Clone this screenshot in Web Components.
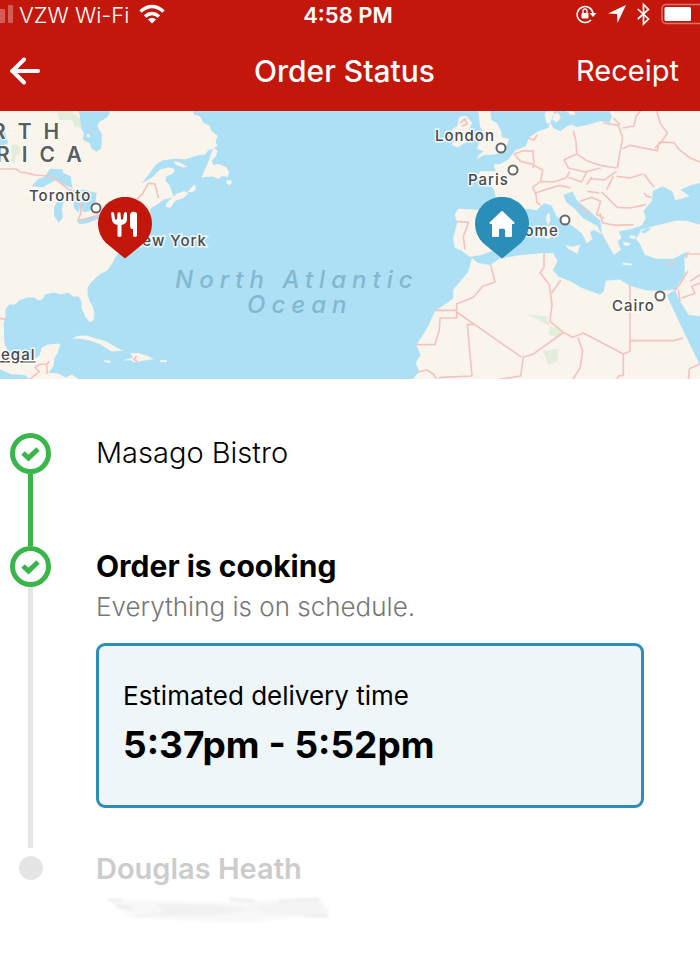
<!DOCTYPE html>
<html lang="en">
<head>
<meta charset="utf-8">
<meta name="viewport" content="width=device-width, initial-scale=1">
<title>Order Status</title>
<style>
  body { margin: 0; background: #fff; color: #000; font-family: Inter, "Liberation Sans", sans-serif; }
</style>
</head>
<body>
<order-page></order-page>

<script>
const define = (name, html) => {
  const template = document.createElement('template');
  template.innerHTML = html;
  customElements.define(name, class extends HTMLElement {
    constructor() {
      super();
      this.attachShadow({ mode: 'open' }).append(template.content.cloneNode(true));
    }
  });
};

define('status-bar', `
<style>
  :host { display: grid; grid-template-columns: 1fr auto 1fr; align-items: center; height: 30px; padding-right: 4px; color: #fff; font-size: 22px; line-height: 30px; overflow: hidden; }
  div { display: flex; align-items: center; }
  .net { font-weight: 300; gap: 6px; }
  .time { font-weight: 600; font-size: 22px; }
  .tray { justify-content: flex-end; gap: 11px; margin-right: -4px; }
  svg { display: block; flex: none; }
  .gap { gap: 10px; }
</style>
<div class="net">
  <svg width="13" height="30" fill="#fff" fill-opacity=".3" aria-label="Signal"><rect x="-4" y="9" width="9" height="14" rx="1"/><rect x="8" y="5" width="5" height="18" rx="1"/></svg>
  <div class="gap"><span>VZW Wi-Fi</span>
  <svg width="26" height="30" viewBox="0 0 26 30" aria-label="Wi-Fi"><g fill="none" stroke="#fff" stroke-width="3.500"><path d="M1.500 11.500Q13 1.500 24.500 11.500"/><path d="M6 16.500Q13 10.500 20 16.500"/></g><path d="M9 19.500Q13 16 17 19.500L13 23.500Z" fill="#fff"/></svg></div>
</div>
<div class="time">4:58 PM</div>
<div class="tray">
  <svg width="21" height="30" viewBox="0 0 21 30" aria-label="Rotation lock"><path d="M15 20A8 8 0 1 1 17 13" fill="none" stroke="#fff" stroke-width="1.600"/><path d="M13.500 13h7l-3.500 4z" fill="#fff"/><rect x="5.500" y="13" width="7" height="5.500" rx="1" fill="#fff"/><path d="M7 13v-2a2 2 0 0 1 4 0V13" fill="none" stroke="#fff" stroke-width="1.300"/></svg>
  <svg width="18" height="30" viewBox="0 0 18 30" aria-label="Location"><path d="M18 5L9.500 23 9 14 0 13.500Z" fill="#fff"/></svg>
  <svg width="13" height="30" viewBox="0 0 13 30" aria-label="Bluetooth"><path d="M.8 9L11.500 19 6.500 24V4.500L11.500 9.500 .8 19" fill="none" stroke="#fff" stroke-width="1.700"/></svg>
  <svg width="39" height="30" viewBox="0 0 39 30" aria-label="Battery"><rect x="1" y="4.500" width="48" height="19" rx="4" fill="none" stroke="#fff" stroke-opacity=".4" stroke-width="1.500"/><rect x="3.500" y="7" width="26.500" height="14" rx="1.500" fill="#fff"/></svg>
</div>`);

define('nav-bar', `
<style>
  :host { display: grid; grid-template-columns: 1fr auto 1fr; align-items: center; height: 81px; padding: 0 21px 0 10px; box-sizing: border-box; color: #fff; }
  button { border: 0; background: none; padding: 0; color: inherit; width: 32px; height: 44px; cursor: pointer; }
  svg { display: block; }
  h1 { margin: 0; font-size: 30px; font-weight: 500; line-height: 36px; }
  a { justify-self: end; color: inherit; text-decoration: none; font-size: 29px; line-height: 36px; font-weight: 400; }
</style>
<button type="button" aria-label="Back"><svg width="32" height="44" viewBox="0 0 32 44" fill="none" stroke="#fff" stroke-width="4" stroke-linecap="round" stroke-linejoin="round"><path d="M2 22H28M14 10.500L2.500 22 14 33.500"/></svg></button>
<h1><slot></slot></h1>
<a href="#receipt">Receipt</a>`);

define('map-pin', `
<style>
  :host { position: absolute; display: block; width: 54px; height: 62px; }
  svg { position: absolute; inset: 0; display: block; }
  path { fill: var(--pin); }
</style>
<svg width="54" height="62" viewBox="0 0 54 62"><path d="M27 61.500L8 46A27 27 0 1 1 46 46Z"/></svg>
<slot></slot>`);

define('route-map', `
<style>
  :host { display: block; position: relative; aspect-ratio: 700 / 268; overflow: hidden; background: #ade0f5; }
  .map { display: block; width: 100%; height: 100%; }
  .land { fill: #f9f5ed; stroke: #f9f5ed; stroke-width: 1; stroke-linejoin: round; }
  .water { fill: #ade0f5; }
  .border { fill: none; stroke: #f5c3bf; stroke-width: 5; stroke-linejoin: round; }
  .park { fill: #e2eddb; }
  .city { font-size: 15px; font-weight: 500; letter-spacing: 1px; fill: #494949; stroke: #fffc; stroke-width: 3; paint-order: stroke; }
  .area { font-size: 21px; font-weight: 600; letter-spacing: 12px; fill: #5b5e5e; stroke: #fffc; stroke-width: 2; paint-order: stroke; }
  .sea { font-size: 24px; font-weight: 500; font-style: italic; letter-spacing: 6px; fill: #82b8cf; }
  .dot { fill: #fff; stroke: #686868; stroke-width: 2; }
  .eat { left: 14%; top: 32.100%; --pin: #c4170c; }
  .home { left: 67.900%; top: 32.100%; --pin: #2a8eb8; }
  map-pin svg { position: relative; display: block; }
</style>
<svg class="map" viewBox="0 111 700 268" preserveAspectRatio="xMidYMid slice" role="img" aria-label="Delivery map">
  <path class="land" d="M0 109H191L194 115 200 117 203 123 209 126 211 131 217 136 215 142 217 146 208 150 205 154 197 155 185 159 176 158 162 160 155 165 147 176 140 185 152 178 160 170 168 168 174 169 173 173 166 176 165 181 169 185 171 191 173 197 164 199 157 204 150 208 148 218 146 229 142 239 130 248 119 252 115 257 112 263 107 270 101 273 95 278 90 283 87 288 87 294 89 301 92 306 94 313 93 320 90 322 86 317 82 308 82 302 79 296 73 296 68 292 61 294 54 292 45 294 42 299 38 300 34 297 27 297 19 300 15 304 9 304 5 309 5 317 3 323 4 344 9 355 20 361 33 360 40 356 42 348 48 345 60 344 57 353 54 358 53 366 48 373 58 374 66 378 72 375 79 380H30L26 375 20 374 12 374 0 369Z"/>
  <g transform="translate(0 108) scale(.33333)">
    <path class="land" d="M640 120L652 128 647 145 635 158 640 172 655 168 678 178 686 192 683 207 668 203 655 212 640 205 605 208 615 185 628 155ZM682 216l14 4-6 12-10-6ZM522 160l18 4 20 12-12 2-20-8ZM500 285L530 258 552 250 565 256 550 270 525 278 512 298 498 297ZM575 238l10-8 2 14-10 8-14 0Z"/>
    <path class="park" d="M172 8H210L245 35V60L225 57 215 36 178 36ZM35 112l14-4 12 12-2 20-12 0-2 24-10 0Z"/>
    <path class="water" d="M237 8H332L322 28 298 42 292 55 306 80 304 120 290 131 275 122 268 105 248 95 252 75 244 62ZM0 68L15 72 25 105 0 116ZM95 235L112 215 135 205 150 182 187 184 190 195 212 205 217 240 195 232 170 215 150 226 128 238ZM162 300L172 278 188 255 218 240 212 256 190 282 186 305 188 330 176 344 163 325ZM218 245L255 245 290 255 286 285 268 310 250 312 240 290 236 315 222 300 220 275ZM230 338L270 326 310 315 300 330 262 346 240 349Z"/>
    <path class="land" d="M260 78l8 2 3 7-9-1Z"/>
    <path class="border" d="M0 183H48L62 193 75 194 105 201 150 204 175 220 205 243 240 280 243 315 234 336 262 333 300 320M410 275L427 258 445 226 465 228 475 270"/>
  </g>
  <g transform="translate(0 240) scale(.33333)">
    <path class="land" d="M217 297L233 288 260 287 285 295 320 305 345 320 368 332 335 334 300 312 265 300 235 295ZM390 340L415 340 440 347 460 357 425 362 405 367 390 360 370 361 400 353ZM312 361l20 2-2 5-16-2ZM480 361l20 0 0 5-18 0Z"/>
    <path class="border" d="M0 235L20 239M90 417L118 395 105 382 120 373 140 372 148 365M140 375L142 402M410 347L402 358 412 365"/>
  </g>
  <g transform="translate(400 108) scale(.33333)">
    <path class="land" d="M235 5H270L273 35 290 45 303 68 305 88 327 93 320 112 305 122 315 132 275 140 253 140 230 153 238 140 252 130 232 122 240 98 262 94 270 75 250 72 240 55 238 30ZM178 28L198 24 216 44 207 62 210 98 190 107 172 118 155 110 168 85 155 66 172 55Z"/>
    <path class="land" d="M900 5H628L636 25 630 45 600 40 560 52 530 58 515 50 500 56 482 70 462 62 452 47 440 45 434 18 442 8 462 8 452 42 445 60 412 72 388 88 378 115 345 128 325 155 302 168 282 170 288 190 242 190 230 205 262 222 283 245 292 290 280 310 230 305 175 303 165 320 172 345 160 390 165 420 182 426 210 446 245 440 285 425 320 380 345 310 385 302 410 306 432 285 455 292 470 325 520 355 548 378 560 406 576 394 570 372 582 365 604 378 592 355 548 330 524 303 498 283 490 260 518 250 530 275 568 308 602 338 606 375 622 405 642 440 662 425 652 400 664 390 656 370 695 362 725 352 737 330 730 308 755 278 758 248 788 235 818 250 826 276 868 265 840 245 875 230 900 225Z"/>
    <path class="land" d="M718 378L722 366 762 355 830 338 862 340 900 350V625L866 620 835 570 826 545 792 548 740 548 690 534 660 515 618 518 612 550 600 560 545 540 510 520 475 506 458 486 472 460 460 436 430 436 360 442 300 452 270 472 232 465 216 450 205 492 160 545 160 572 105 610 85 655 50 712 62 740 48 765 58 790 36 818H900V760L870 710 855 680 800 560 826 545 855 500 854 446 872 430 850 436 820 452 770 452 735 440 720 408 708 393Z"/>
    <path class="land" d="M498 412L518 417 540 410 532 437 505 422ZM440 322l7-8 4 22-7 14-5-12ZM436 355l18-2 0 34-14 6ZM460 18l14-3 8 14-12 14-12-8ZM500 8l20 0 6 12-15 0ZM668 464l28 4 0 4-26-2ZM670 402l20 4-4 8-14-3ZM690 382l16 3-2 8-14-4Z"/>
    <path class="water" d="M800 562L820 590 830 600 834 570 842 602 868 632 900 688V772L874 718 862 688 842 650ZM890 240L900 235V280L872 262ZM720 372l22-12 12 2-20 14Z"/>
    <path class="park" d="M385 620L440 625 450 655 490 670 468 686 445 680 450 655ZM428 728L475 722 472 760 445 772Z"/>
    <g class="border">
      <path d="M385 90L402 96 412 80M342 138L370 128 400 130M342 138L362 160 402 170 398 180M398 125L402 165M402 172L428 186 422 220M520 68L528 100 530 138M530 138L492 155 505 180M530 138L560 158 600 172M505 180L555 192 602 180M600 172L650 180M668 90L662 122 652 180M610 45L655 52 668 90M640 30L660 50M668 60L702 54 708 25 722 8M770 8L780 45 802 75 782 105 765 120M668 122L690 112 772 128 778 102 822 104 838 125 870 150 900 162M422 220L460 222 498 210 510 190M422 220L398 238 408 260M408 254L435 245 480 232 512 240M505 208L545 222 560 192M408 260L410 282 422 292M570 212L612 216 650 190M560 230L575 208M650 205L690 210 728 198M732 198L762 238M562 250L598 255M540 280L575 268 602 280 590 320 612 330M540 292L570 320M605 252L652 298M640 205L620 245M652 298L690 300 738 290M600 315L608 345 648 352 700 350M732 254L740 265 755 268M170 340L206 343 190 385 195 425M180 45L195 32 202 48 185 55"/>
      <path d="M272 470L285 522 248 535 220 568 170 588V630H120L118 665 105 710H48M105 607H170M170 612L365 748M222 650H202L216 804 122 808 112 818M54 792L80 786 100 798 108 812M300 814L362 804 370 748 400 738 488 675M432 436L432 478 420 494 448 530 456 590 450 640 488 672 518 688 550 675 670 738 690 730V530M670 738V802L655 804 650 818M534 688L548 730 540 780 516 818M455 556L482 516M690 698H820L850 690M900 768L868 782 865 818M900 438H862L858 450M825 548L840 528 864 488M845 570L885 556 875 535 900 525M900 500L870 520"/>
      <path d="M835 545L840 580M802 468l22-3"/>
    </g>
  </g>
  <g class="area"><text x="-8" y="139">RTH</text><text x="-4" y="162">RICA</text></g>
  <g class="sea"><text x="175" y="288">North Atlantic</text><text x="247" y="313">Ocean</text></g>
  <g class="city">
    <text x="29" y="201">Toronto</text><text x="130" y="246">New York</text><text x="435" y="141">London</text>
    <text x="468" y="185">Paris</text><text x="514" y="236">Rome</text><text x="612" y="311">Cairo</text>
    <text x="-9" y="360" text-decoration="underline">negal</text>
  </g>
  <g class="dot"><circle cx="96" cy="208" r="4.500"/><circle cx="501" cy="148" r="4.500"/><circle cx="513" cy="170" r="4.500"/><circle cx="565" cy="220" r="4.500"/><circle cx="660" cy="296" r="4.500"/></g>
</svg>
<map-pin class="eat"><svg width="54" height="62" viewBox="0 0 54 62" fill="#fff" aria-label="Restaurant"><path d="M13 16q1.500-2 3 0l1 6q1 1.500 2 0l.5-6q1.500-1.500 3 0l.5 6q1 1.500 2 0l1-6q1.500-2 3 0v7q-.5 4-5.500 5V39q-2 2-4 0V28q-5-1-5.500-5ZM32 18q1-4 4.500-3 2.500 0 2.500 2V39q-2 2-4 0V32h-1.500q-1.500-1-1.500-4Z"/></svg></map-pin>
<map-pin class="home"><svg width="54" height="62" viewBox="0 0 54 62" aria-label="Home"><path d="M27 15L38.500 26H36V39H31V33q0-2.500-4-2.500t-4 2.500v6H18V26H15.500Z" fill="#fff" stroke="#fff" stroke-width="2" stroke-linejoin="round"/></svg></map-pin>`);

define('order-step', `
<style>
  :host { display: grid; grid-template-columns: 41px 1fr; column-gap: 45px; }
  .rail { display: flex; flex-direction: column; align-items: center; }
  .mark { flex: none; box-sizing: border-box; width: 41px; height: 41px; border: 5px solid #39b54a; border-radius: 50%; }
  .mark svg { display: block; width: 31px; height: 31px; }
  .line { flex: 1; width: 5px; background: #e5e5e5; }
  :host([next="done"]) .line { background: #39b54a; }
  :host([pending]) .mark { width: 24px; height: 24px; margin-top: 8px; border: 0; background: #e5e5e5; }
  :host([pending]) .mark svg, :host([pending]) .line { display: none; }
</style>
<div class="rail"><div class="mark"><svg viewBox="0 0 31 31" fill="none" stroke="#39b54a" stroke-width="5"><path d="M8 15L13.500 20 23 11"/></svg></div><div class="line"></div></div>
<div><slot></slot></div>`);

define('delivery-card', `
<style>
  :host { display: block; border: 3px solid #2a8eb8; border-radius: 9px; background: #eef6fa; padding: 32px 24px 38px; }
  p { margin: 0; font-size: 26px; line-height: 36px; font-weight: 400; }
  strong { display: block; margin-top: 9px; font-size: 37px; line-height: 44px; font-weight: 700; }
</style>
<p>Estimated delivery time</p>
<strong><slot></slot></strong>`);

define('order-page', `
<style>
  :host { display: block; }
  header { background: #c4170c; }
  main { padding: 54px 56px 52px 10px; }
  h2 { margin: 0; font-size: 30px; line-height: 41px; font-weight: 700; }
  .light { font-size: 29px; line-height: 40px; font-weight: 300; }
  .pale { color: #ccc; font-weight: 600; font-size: 29px; }
  .first { min-height: 113px; }
  p { margin: 0 0 16px; font-size: 26px; line-height: 40px; font-weight: 300; color: #777; }
  delivery-card { margin-bottom: 40px; }
  .smudge { display: block; margin: 6px 0 0 8px; }
</style>
<header><status-bar></status-bar><nav-bar>Order Status</nav-bar></header>
<route-map></route-map>
<main>
  <order-step class="first" next="done"><h2 class="light">Masago Bistro</h2></order-step>
  <order-step><h2>Order is cooking</h2><p>Everything is on schedule.</p><delivery-card>5:37pm - 5:52pm</delivery-card></order-step>
  <order-step pending><h2 class="pale">Douglas Heath</h2>
    <svg class="smudge" width="232" height="30" viewBox="0 0 232 30" aria-hidden="true">
      <defs><filter id="soft"><feGaussianBlur stdDeviation="1.600"/></filter></defs>
      <g filter="url(#soft)"><path d="M4 5L60 6 120 8 170 5 216 5 225 14 224 22 190 22 150 27 90 26 26 22 14 13Z" fill="#f8f8f8"/><path d="M50 9Q100 8 150 14L110 20 22 22 60 16Z" fill="#f1f1f1"/><path d="M150 10L215 7 222 18 160 19Z" fill="#f3f3f3"/><path d="M125 4L150 6M175 6L216 4M200 21H224M4 5H18M12 11L28 13" stroke="#e6e6e6" stroke-width="2" fill="none"/></g>
    </svg>
  </order-step>
</main>`);
</script>
</body>
</html>
